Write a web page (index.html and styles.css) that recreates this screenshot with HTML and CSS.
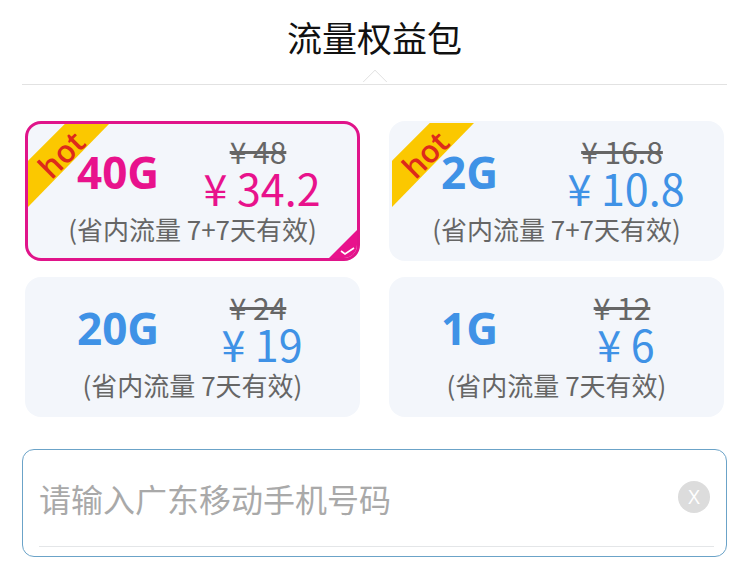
FILE: index.html
```html
<!DOCTYPE html>
<html lang="zh">
<head>
    <meta charset="UTF-8">
    <meta name="viewport" content="width=device-width, initial-scale=1.0">
    <title>流量权益包</title>
    <link rel="stylesheet" href="styles.css">
</head>
<body>
<header class="title-bar">
    <h1>流量权益包</h1>
    <span class="notch"></span>
</header>

<div class="packs">
    <div class="pack selected">
        <div class="ribbon"><span>hot</span></div>
        <div class="pack-main">
            <div class="size">40G</div>
            <div class="prices">
                <div class="old-price">¥ 48</div>
                <div class="price">¥ 34.2</div>
            </div>
        </div>
        <div class="note">(省内流量 7+7天有效)</div>
        <svg class="tick" width="30" height="30" viewBox="0 0 30 30">
            <path d="M30 0V19Q30 30 19 30H0Z" fill="#e8128c"/>
            <path d="M13 22l4 3 9-6" fill="none" stroke="#fff" stroke-width="1.6"/>
        </svg>
    </div>
    <div class="pack">
        <div class="ribbon"><span>hot</span></div>
        <div class="pack-main">
            <div class="size">2G</div>
            <div class="prices">
                <div class="old-price">¥ 16.8</div>
                <div class="price">¥ 10.8</div>
            </div>
        </div>
        <div class="note">(省内流量 7+7天有效)</div>
    </div>
    <div class="pack">
        <div class="pack-main">
            <div class="size">20G</div>
            <div class="prices">
                <div class="old-price">¥ 24</div>
                <div class="price">¥ 19</div>
            </div>
        </div>
        <div class="note">(省内流量 7天有效)</div>
    </div>
    <div class="pack">
        <div class="pack-main">
            <div class="size">1G</div>
            <div class="prices">
                <div class="old-price">¥ 12</div>
                <div class="price">¥ 6</div>
            </div>
        </div>
        <div class="note">(省内流量 7天有效)</div>
    </div>
</div>

<div class="phone-box">
    <div class="phone-row">
        <input type="text" class="phone-input" placeholder="请输入广东移动手机号码">
        <span class="clear-btn">X</span>
    </div>
</div>
</body>
</html>
```

FILE: styles.css
```css
body {
    margin: 0;
    background: #fff;
    font-family: "Open Sans", "Noto Sans CJK SC", sans-serif;
}
.title-bar {
    position: relative;
    margin: 0 16px 0 22px;
    height: 84px;
    border-bottom: 1px solid #e2e2e2;
    text-align: center;
}
.title-bar h1 {
    margin: 0;
    padding-top: 12px;
    font-family: "Noto Sans CJK SC", sans-serif;
    font-size: 35px;
    line-height: 50px;
    font-weight: 400;
    color: #111;
}
.notch {
    position: absolute;
    left: 344px;
    bottom: -7px;
    width: 17px;
    height: 17px;
    background: #fff;
    border-top: 1px solid #e2e2e2;
    border-left: 1px solid #e2e2e2;
    transform: rotate(45deg);
    clip-path: polygon(0 0, 100% 0, 0 100%);
}
.packs {
    display: grid;
    grid-template-columns: 335px 335px;
    grid-auto-rows: 140px;
    column-gap: 29px;
    row-gap: 16px;
    margin: 36px 0 0 25px;
}
.pack {
    position: relative;
    box-sizing: border-box;
    padding-top: 15px;
    background: #f3f6fb;
    border-radius: 16px;
    overflow: hidden;
    text-align: center;
}
.pack.selected {
    padding-top: 12px;
    border: 3px solid #e0148a;
}
.pack-main {
    display: flex;
    align-items: center;
    height: 76px;
    padding-left: 52px;
}
.selected .pack-main {
    padding-left: 49px;
}
.size {
    width: 120px;
    margin-bottom: 4px;
    text-align: left;
    font-size: 44px;
    line-height: 48px;
    font-weight: 700;
    color: #3f92e6;
}
.selected .size,
.selected .price {
    color: #e8128c;
}
.prices {
    width: 130px;
    margin-bottom: 6px;
    white-space: nowrap;
    display: flex;
    flex-direction: column;
    align-items: center;
    font-family: "Noto Sans CJK SC", sans-serif;
}
.old-price {
    margin-right: 8px;
    font-size: 30px;
    line-height: 32px;
    color: #666;
    text-decoration: line-through;
}
.price {
    font-size: 43px;
    line-height: 40px;
    color: #3f92e6;
}
.note {
    font-family: "Noto Sans CJK SC", sans-serif;
    font-size: 26px;
    line-height: 34px;
    color: #666;
    white-space: nowrap;
}
.ribbon {
    position: absolute;
    left: 3px;
    top: 2px;
    width: 82px;
    height: 84px;
}
.ribbon::before {
    content: "";
    position: absolute;
    inset: 0;
    background: #fbc800;
    clip-path: polygon(46% 0, 100% 0, 0 100%, 0 45%);
}
.selected .ribbon {
    left: 0;
    top: -1px;
}
.ribbon span {
    position: absolute;
    left: 5px;
    top: 14px;
    width: 56px;
    font-size: 31px;
    line-height: 34px;
    font-weight: 600;
    color: #dd2a1b;
    transform: rotate(-45deg);
}
.tick {
    position: absolute;
    right: -1px;
    bottom: -1px;
}
.phone-box {
    box-sizing: border-box;
    margin: 32px 16px 0 22px;
    height: 108px;
    padding: 0 12px 0 16px;
    border: 1px solid #6ba3c8;
    border-radius: 12px;
}
.phone-row {
    display: flex;
    align-items: center;
    height: 96px;
    border-bottom: 1px solid #e4e6e8;
}
.phone-input {
    flex: 1;
    min-width: 0;
    border: none;
    outline: none;
    padding: 0;
    background: transparent;
    font-family: "Noto Sans CJK SC", sans-serif;
    font-size: 32px;
}
.phone-input::placeholder {
    color: #a9a9a9;
    opacity: 1;
}
.clear-btn {
    width: 32px;
    height: 32px;
    margin: 0 4px 2px 0;
    border-radius: 50%;
    background: #dcdcdc;
    color: #fff;
    font-size: 20px;
    line-height: 32px;
    text-align: center;
}
```
